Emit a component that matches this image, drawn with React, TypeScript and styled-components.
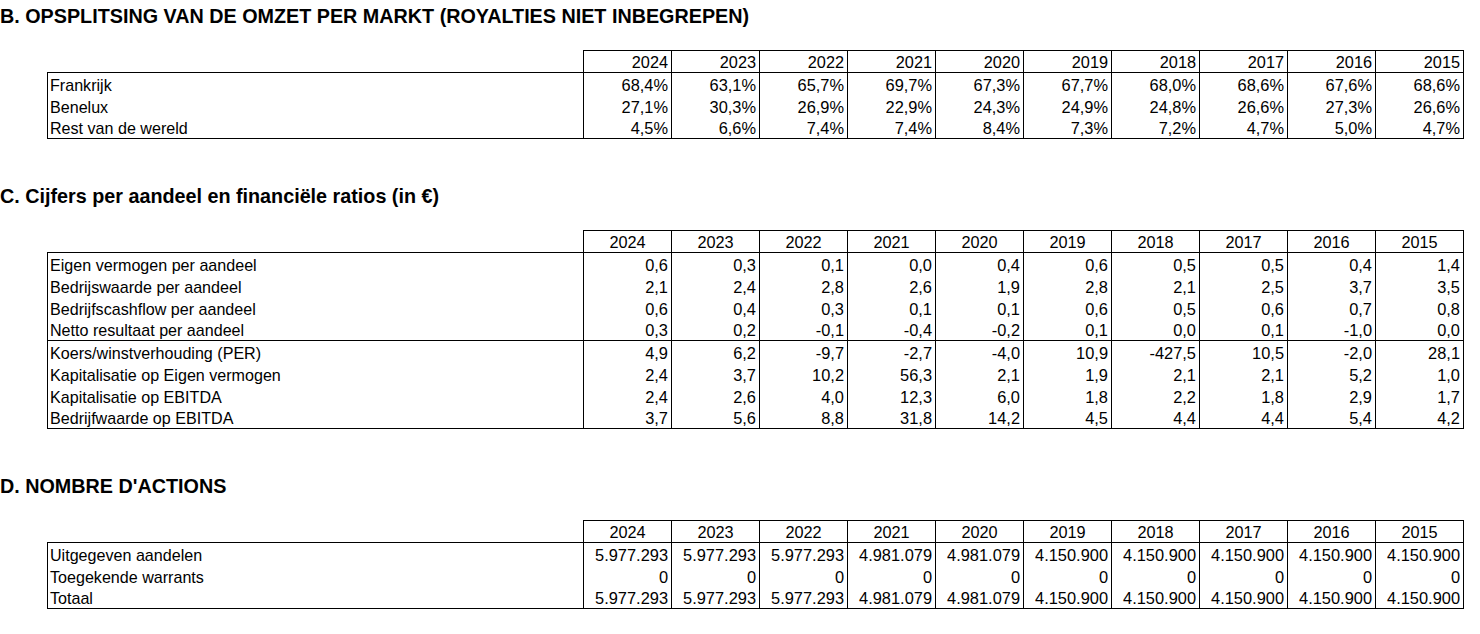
import React from 'react'
import styled, { createGlobalStyle } from 'styled-components'

const GlobalStyle = createGlobalStyle`
  body {
    margin: 0;
    background: #ffffff;
    color: #000000;
    font-family: "Liberation Sans", Arial, sans-serif;
  }
`

const years = ['2024', '2023', '2022', '2021', '2020', '2019', '2018', '2017', '2016', '2015']

type Row = { label: string; values: string[]; rule?: boolean }

const markets: Row[] = [
  { label: 'Frankrijk', values: ['68,4%', '63,1%', '65,7%', '69,7%', '67,3%', '67,7%', '68,0%', '68,6%', '67,6%', '68,6%'] },
  { label: 'Benelux', values: ['27,1%', '30,3%', '26,9%', '22,9%', '24,3%', '24,9%', '24,8%', '26,6%', '27,3%', '26,6%'] },
  { label: 'Rest van de wereld', values: ['4,5%', '6,6%', '7,4%', '7,4%', '8,4%', '7,3%', '7,2%', '4,7%', '5,0%', '4,7%'] },
]

const ratios: Row[] = [
  { label: 'Eigen vermogen per aandeel', values: ['0,6', '0,3', '0,1', '0,0', '0,4', '0,6', '0,5', '0,5', '0,4', '1,4'] },
  { label: 'Bedrijswaarde per aandeel', values: ['2,1', '2,4', '2,8', '2,6', '1,9', '2,8', '2,1', '2,5', '3,7', '3,5'] },
  { label: 'Bedrijfscashflow per aandeel', values: ['0,6', '0,4', '0,3', '0,1', '0,1', '0,6', '0,5', '0,6', '0,7', '0,8'] },
  { label: 'Netto resultaat per aandeel', values: ['0,3', '0,2', '-0,1', '-0,4', '-0,2', '0,1', '0,0', '0,1', '-1,0', '0,0'], rule: true },
  { label: 'Koers/winstverhouding (PER)', values: ['4,9', '6,2', '-9,7', '-2,7', '-4,0', '10,9', '-427,5', '10,5', '-2,0', '28,1'] },
  { label: 'Kapitalisatie op Eigen vermogen', values: ['2,4', '3,7', '10,2', '56,3', '2,1', '1,9', '2,1', '2,1', '5,2', '1,0'] },
  { label: 'Kapitalisatie op EBITDA', values: ['2,4', '2,6', '4,0', '12,3', '6,0', '1,8', '2,2', '1,8', '2,9', '1,7'] },
  { label: 'Bedrijfwaarde op EBITDA', values: ['3,7', '5,6', '8,8', '31,8', '14,2', '4,5', '4,4', '4,4', '5,4', '4,2'] },
]

const issued = ['5.977.293', '5.977.293', '5.977.293', '4.981.079', '4.981.079', '4.150.900', '4.150.900', '4.150.900', '4.150.900', '4.150.900']

const shares: Row[] = [
  { label: 'Uitgegeven aandelen', values: issued },
  { label: 'Toegekende warrants', values: years.map(() => '0') },
  { label: 'Totaal', values: issued },
]

const Page = styled.div`
  padding-top: 4px;
  width: 1480px;
`

const Section = styled.section`
  margin-bottom: 45px;
`

const Title = styled.h2`
  margin: 0 0 22px 0;
  font-size: 19.75px;
  line-height: 24px;
  font-weight: bold;
  white-space: nowrap;
`

const Grid = styled.div`
  display: grid;
  grid-template-columns: 535px repeat(10, 88px);
`

const HeaderRow = styled(Grid)`
  margin-left: 47px;
  width: 1417px;
  box-sizing: border-box;
  border-left: 1px solid transparent;
  border-right: 1px solid #000;
  height: 22px;
`

const Body = styled.div`
  margin-left: 47px;
  width: 1417px;
  box-sizing: border-box;
  border-top: 1px solid #000;
  border-left: 1px solid #000;
  border-right: 1px solid #000;
`

// rows are 22px; a rule row draws its line inside that height
const BodyRow = styled(Grid)<{ $rule?: boolean }>`
  height: 22px;
  box-sizing: border-box;
  border-bottom: ${(p) => (p.$rule ? '1px solid #000' : 'none')};
  line-height: ${(p) => (p.$rule ? '19px' : '20px')};
  &:last-child {
    border-bottom: 1px solid #000;
    line-height: 19px;
  }
`

const YearCell = styled.div<{ $align: 'right' | 'center' }>`
  border-top: 1px solid #000;
  border-left: 1px solid #000;
  font-size: 16.3px;
  line-height: 19px;
  text-align: ${(p) => p.$align};
  padding: 2px 3px 0 3px;
`

const Label = styled.div`
  font-size: 16.1px;
  padding: 2px 0 0 2px;
  white-space: nowrap;
`

const Value = styled.div`
  border-left: 1px solid #000;
  font-size: 16.4px;
  text-align: right;
  padding: 2px 3px 0 0;
  white-space: nowrap;
`

function DataTable({ rows, headerAlign }: { rows: Row[]; headerAlign: 'right' | 'center' }) {
  return (
    <div>
      <HeaderRow>
        <div />
        {years.map((y) => (
          <YearCell key={y} $align={headerAlign}>
            {y}
          </YearCell>
        ))}
      </HeaderRow>
      <Body>
        {rows.map((row) => (
          <BodyRow key={row.label} $rule={row.rule}>
            <Label>{row.label}</Label>
            {row.values.map((v, i) => (
              <Value key={i}>{v}</Value>
            ))}
          </BodyRow>
        ))}
      </Body>
    </div>
  )
}

export default function App() {
  return (
    <Page>
      <GlobalStyle />
      <Section>
        <Title>B. OPSPLITSING VAN DE OMZET PER MARKT (ROYALTIES NIET INBEGREPEN)</Title>
        <DataTable rows={markets} headerAlign="right" />
      </Section>
      <Section>
        <Title>C. Cijfers per aandeel en financiële ratios (in €)</Title>
        <DataTable rows={ratios} headerAlign="center" />
      </Section>
      <Section>
        <Title>D. NOMBRE D'ACTIONS</Title>
        <DataTable rows={shares} headerAlign="center" />
      </Section>
    </Page>
  )
}
